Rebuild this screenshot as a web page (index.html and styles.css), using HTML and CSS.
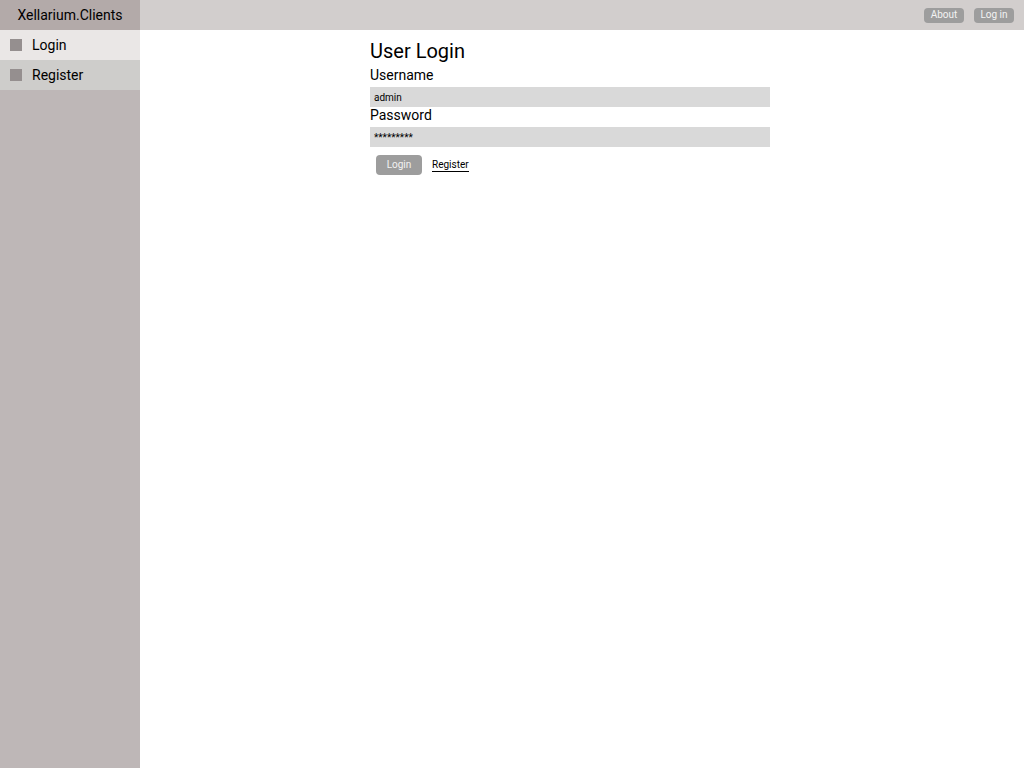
FILE: index.html
```html
<!DOCTYPE html>
<html lang="en">
<head>
<meta charset="utf-8">
<meta name="viewport" content="width=device-width, initial-scale=1">
<title>Xellarium.Clients</title>
<link rel="stylesheet" href="styles.css">
</head>
<body>
<div class="app">
  <aside class="sidebar">
    <div class="brand">Xellarium.Clients</div>
    <nav class="menu">
      <a class="menu-item active" href="#login"><span class="menu-icon"></span>Login</a>
      <a class="menu-item" href="#register"><span class="menu-icon"></span>Register</a>
    </nav>
  </aside>
  <div class="page">
    <header class="topbar">
      <button class="button small" type="button">About</button>
      <button class="button small" type="button">Log in</button>
    </header>
    <main class="content">
      <form class="login-form">
        <h1 class="title">User Login</h1>
        <label class="label" for="username">Username</label>
        <input class="field" id="username" type="text" value="admin">
        <label class="label" for="password">Password</label>
        <input class="field" id="password" type="text" value="*********">
        <div class="actions">
          <button class="button" type="button">Login</button>
          <a class="link" href="#register">Register</a>
        </div>
      </form>
    </main>
  </div>
</div>
</body>
</html>
```
FILE: styles.css
```css
* {
  box-sizing: border-box;
}

body {
  margin: 0;
  background: #fff;
  color: #000;
  font-family: Roboto, "Liberation Sans", sans-serif;
  font-size: 14px;
}

.app {
  display: flex;
  min-height: 100vh;
}

.sidebar {
  flex: 0 0 140px;
  background: #beb7b7;
}

.brand {
  background: #b3aaa9;
  line-height: 30px;
  text-align: center;
}

.menu-item {
  display: flex;
  align-items: center;
  gap: 10px;
  padding: 0 10px;
  background: #cecdcb;
  color: #000;
  line-height: 30px;
  text-decoration: none;
}

.menu-item.active {
  background: #eae7e6;
}

.menu-icon {
  width: 12px;
  height: 12px;
  background: #958f8f;
}

.page {
  flex: 1;
  min-width: 0;
}

.topbar {
  display: flex;
  align-items: center;
  justify-content: flex-end;
  gap: 10px;
  height: 30px;
  padding: 0 10px;
  background: #d2cecd;
}

.button {
  min-width: 46px;
  height: 20px;
  padding: 0 10px 2px;
  border: 0;
  border-radius: 4px;
  background: #9d9d9d;
  color: #f3f3f3;
  font-family: inherit;
  font-size: 10px;
  cursor: pointer;
}

.button.small {
  min-width: 40px;
  height: 15px;
  padding: 0 6px 2px;
}

.content {
  padding: 8px 24px 8px 0;
}

.login-form {
  max-width: 400px;
  margin: 0 auto;
}

.title {
  margin: 0;
  padding-bottom: 3px;
  font-size: 20px;
  font-weight: 400;
  line-height: 26px;
}

.label {
  display: block;
  padding-bottom: 4px;
  line-height: 16px;
}

.field {
  display: block;
  width: 100%;
  height: 20px;
  padding: 0 4px;
  border: 0;
  border-radius: 0;
  background: #d9d9d9;
  color: #000;
  font-family: inherit;
  font-size: 10px;
}

.actions {
  display: flex;
  align-items: center;
  gap: 10px;
  padding: 8px 6px;
}

.link {
  border-bottom: 1px solid #000;
  color: #000;
  font-size: 10px;
  line-height: 12px;
  text-decoration: none;
}
```
